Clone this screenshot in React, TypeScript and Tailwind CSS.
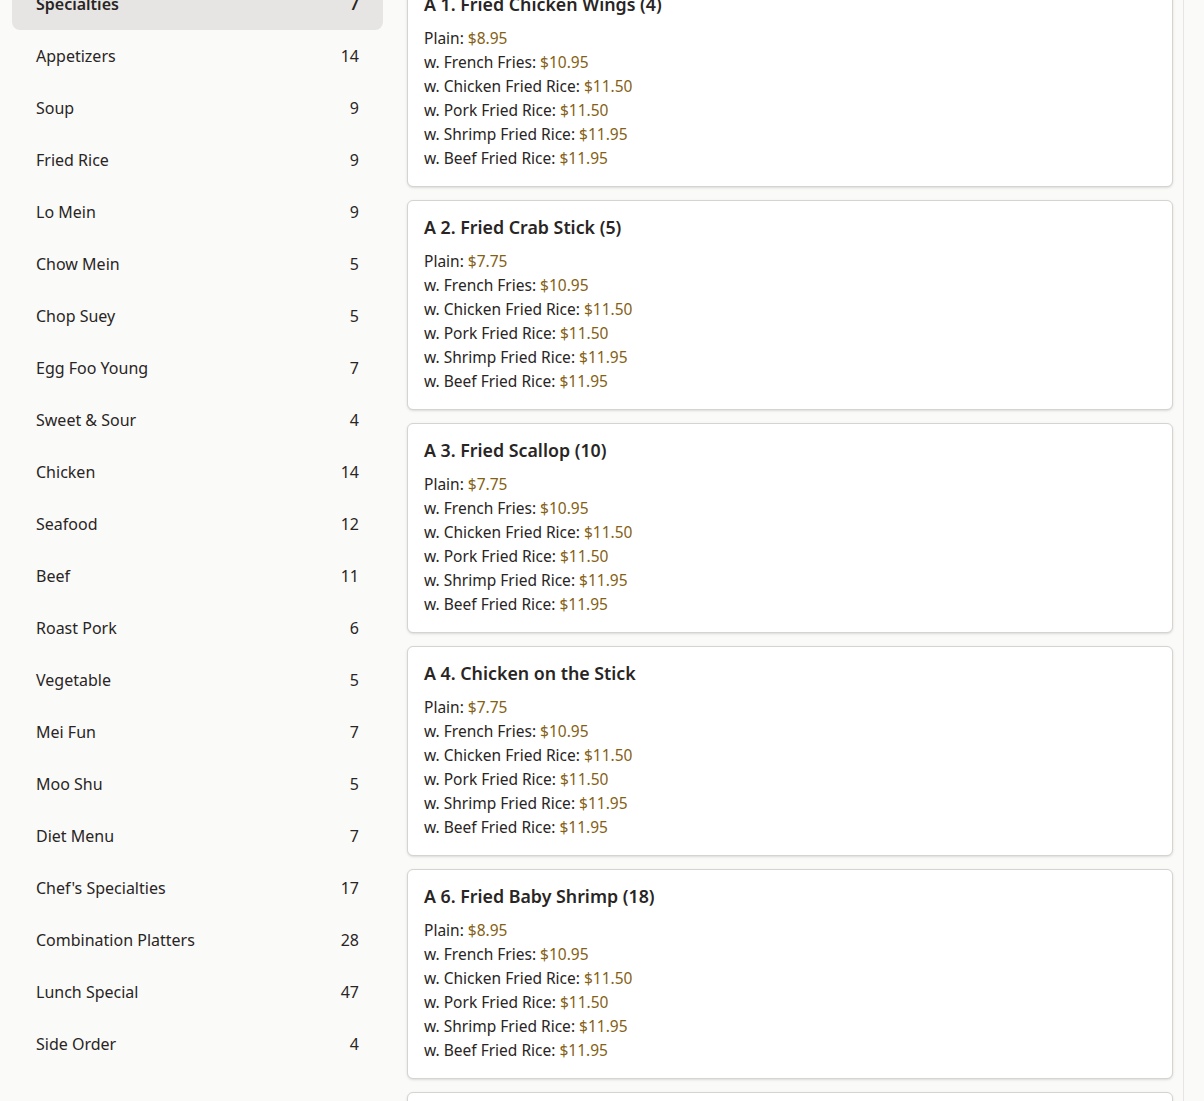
import React from "react";

const CATEGORIES: [string, number][] = [
  ["Specialties", 7],
  ["Appetizers", 14],
  ["Soup", 9],
  ["Fried Rice", 9],
  ["Lo Mein", 9],
  ["Chow Mein", 5],
  ["Chop Suey", 5],
  ["Egg Foo Young", 7],
  ["Sweet & Sour", 4],
  ["Chicken", 14],
  ["Seafood", 12],
  ["Beef", 11],
  ["Roast Pork", 6],
  ["Vegetable", 5],
  ["Mei Fun", 7],
  ["Moo Shu", 5],
  ["Diet Menu", 7],
  ["Chef's Specialties", 17],
  ["Combination Platters", 28],
  ["Lunch Special", 47],
  ["Side Order", 4],
];

const SIDES: [string, string][] = [
  ["w. French Fries", "$10.95"],
  ["w. Chicken Fried Rice", "$11.50"],
  ["w. Pork Fried Rice", "$11.50"],
  ["w. Shrimp Fried Rice", "$11.95"],
  ["w. Beef Fried Rice", "$11.95"],
];

const ITEMS = [
  { name: "A 1. Fried Chicken Wings (4)", plain: "$8.95" },
  { name: "A 2. Fried Crab Stick (5)", plain: "$7.75" },
  { name: "A 3. Fried Scallop (10)", plain: "$7.75" },
  { name: "A 4. Chicken on the Stick", plain: "$7.75" },
  { name: "A 6. Fried Baby Shrimp (18)", plain: "$8.95" },
  { name: "A 7. Egg Roll (1)", plain: "$1.95" },
];

function MenuCard({ name, plain }: { name: string; plain: string }) {
  const rows: [string, string][] = [["Plain", plain], ...SIDES];
  return (
    <div className="rounded-md border border-[#d6d3d1] bg-white p-4 shadow-sm">
      <h3 className="mb-[12px] text-[17.8px] font-semibold leading-[20px] text-[#292524]">{name}</h3>
      <ul className="text-[15.5px] leading-6 text-[#292524]">
        {rows.map(([label, price]) => (
          <li key={label}>
            {label}: <span className="text-[#855f14]">{price}</span>
          </li>
        ))}
      </ul>
    </div>
  );
}

export default function App() {
  return (
    <div
      className="h-[1101px] overflow-hidden bg-[#fafaf9] text-[#292524]"
      style={{ fontFamily: '"Noto Sans", "Open Sans", sans-serif' }}
    >
      {/* page is shown scrolled down a little, so the first row is cut at the top */}
      <div className="-mt-[23px] flex">
        <aside className="ml-3 w-[371px] shrink-0 pt-px">
          <ul>
            {CATEGORIES.map(([label, count], i) => (
              <li
                key={label}
                className={
                  i === 0
                    ? "flex h-[52px] items-center justify-between rounded-lg bg-[#e7e5e4] px-6 text-base font-semibold"
                    : "flex h-[52px] items-center justify-between px-6 text-base"
                }
              >
                <span>{label}</span>
                <span>{count}</span>
              </li>
            ))}
          </ul>
        </aside>
        <main className="ml-3 flex w-[789px] flex-col gap-[13px] border-r border-[#e7e5e4] pl-3 pr-[10px]">
          {ITEMS.map((it) => (
            <MenuCard key={it.name} name={it.name} plain={it.plain} />
          ))}
        </main>
      </div>
    </div>
  );
}
